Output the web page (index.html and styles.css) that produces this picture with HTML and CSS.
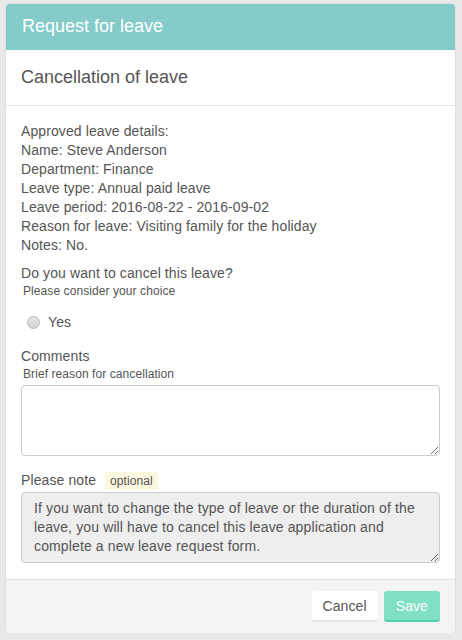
FILE: index.html
```html
<!DOCTYPE html>
<html lang="en">
<head>
<meta charset="utf-8">
<title>Request for leave</title>
<link rel="stylesheet" href="styles.css">
</head>
<body>
<div class="card">
  <div class="card-head">Request for leave</div>
  <div class="card-sub">Cancellation of leave</div>
  <div class="card-body">
    <div class="details">
      <div>Approved leave details:</div>
      <div>Name: Steve Anderson</div>
      <div>Department: Finance</div>
      <div>Leave type: Annual paid leave</div>
      <div>Leave period: 2016-08-22 - 2016-09-02</div>
      <div>Reason for leave: Visiting family for the holiday</div>
      <div>Notes: No.</div>
    </div>
    <div class="field field-first">
      <div class="label">Do you want to cancel this leave?</div>
      <div class="hint">Please consider your choice</div>
      <label class="radio"><span class="radio-dot"></span><span>Yes</span></label>
    </div>
    <div class="field">
      <div class="label">Comments</div>
      <div class="hint">Brief reason for cancellation</div>
      <textarea class="area"></textarea>
    </div>
    <div class="field">
      <div class="label">Please note <span class="badge">optional</span></div>
      <textarea class="area readonly" readonly>If you want to change the type of leave or the duration of the leave, you will have to cancel this leave application and complete a new leave request form.</textarea>
    </div>
  </div>
  <div class="card-foot">
    <button class="btn btn-cancel">Cancel</button>
    <button class="btn btn-save">Save</button>
  </div>
</div>
</body>
</html>
```
FILE: styles.css
```css
html, body {
  margin: 0;
  padding: 0;
}
body {
  background: #e9e9e9;
  font-family: "Liberation Sans", Arial, sans-serif;
  font-size: 14px;
  color: #555;
  padding: 4px 7px 0 6px;
}
.card {
  background: #fff;
  border-radius: 4px;
  box-shadow: 0 0 2px rgba(0,0,0,0.15);
  overflow: hidden;
}
.card-head {
  background: #84cbc9;
  color: #fff;
  font-size: 18px;
  height: 46px;
  line-height: 44px;
  padding: 0 16px;
}
.card-sub {
  font-size: 18px;
  line-height: 24px;
  padding: 15px 15px 16px;
  border-bottom: 1px solid #e8e8e8;
  color: #555;
}
.card-body {
  padding: 16px 15px 16px;
  letter-spacing: 0.1px;
}
.details {
  line-height: 19px;
}
.field {
  margin-top: 15px;
}
.field-first {
  margin-top: 9px;
}
.label {
  line-height: 19px;
}
.hint {
  font-size: 12px;
  line-height: 17px;
  padding-left: 2px;
  letter-spacing: 0.08px;
}
.radio {
  display: flex;
  align-items: center;
  gap: 8px;
  padding-left: 6px;
  margin-top: 13px;
  line-height: 19px;
  font-size: 14px;
}
.radio-dot {
  width: 11px;
  height: 11px;
  border-radius: 50%;
  border: 1px solid #b9b9b9;
  background: linear-gradient(#e6e6e6, #d4d4d4);
  margin-top: -1px;
}
.area {
  display: block;
  box-sizing: border-box;
  width: 100%;
  height: 71px;
  margin-top: 2px;
  border: 1px solid #ccc;
  border-radius: 4px;
  padding: 6px 12px;
  font-family: "Liberation Sans", Arial, sans-serif;
  font-size: 14px;
  line-height: 19px;
  letter-spacing: 0.13px;
  color: #555;
  background: #fff;
}
.readonly {
  background: #eee;
  margin-top: 2px;
  overflow: hidden;
}
.badge {
  display: inline-block;
  background: #fcf7e0;
  color: #555;
  font-size: 12px;
  line-height: 18px;
  padding: 0 5px;
  margin-left: 5px;
}
.card-foot {
  background: #f4f4f4;
  border-top: 1px solid #e2e2e2;
  padding: 11px 15px 11px;
  display: flex;
  justify-content: flex-end;
  gap: 6px;
}
.btn {
  font-family: "Liberation Sans", Arial, sans-serif;
  font-size: 14px;
  letter-spacing: 0.1px;
  height: 31px;
  border: none;
  border-radius: 3px;
  padding: 0 11px;
  cursor: pointer;
}
.btn-cancel {
  background: #fff;
  color: #555;
  border-bottom: 2px solid #e3e3e3;
}
.btn-save {
  background: #80e0c4;
  color: #fff;
  border-bottom: 2px solid #52d2aa;
  padding: 0 12px;
}
```
